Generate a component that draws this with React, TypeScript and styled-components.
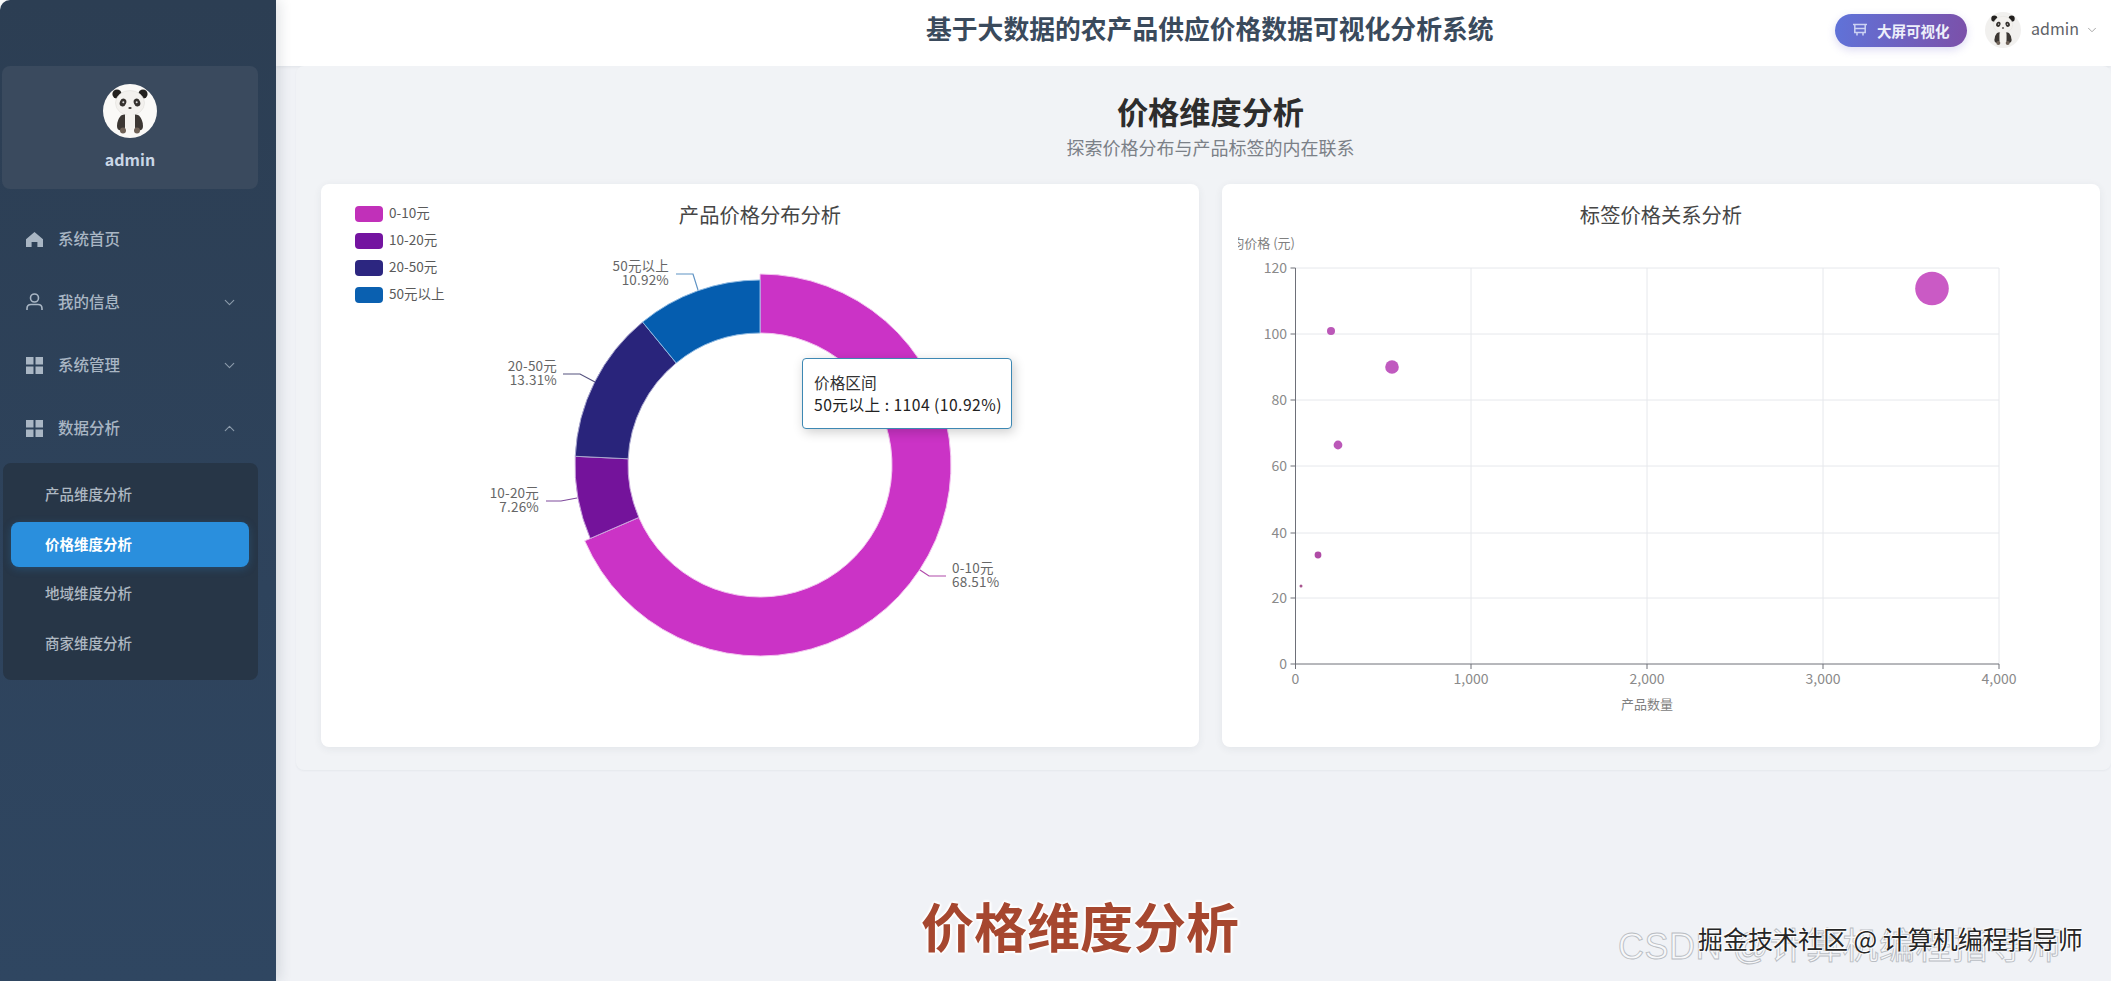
import React from "react";
import styled, { createGlobalStyle } from "styled-components";
import { ChevronDown, ChevronUp } from "lucide-react";

const CJK = `"Noto Sans CJK SC", "Noto Sans", sans-serif`;

const GlobalStyle = createGlobalStyle`
  html, body {
    margin: 0;
    padding: 0;
    width: 2111px;
    height: 981px;
    overflow: hidden;
    background: #ffffff;
    font-family: ${CJK};
  }
  * { box-sizing: border-box; }
`;

const menuItems = [
  { label: "系统首页", icon: "home", arrow: "none" },
  { label: "我的信息", icon: "user", arrow: "down" },
  { label: "系统管理", icon: "grid", arrow: "down" },
  { label: "数据分析", icon: "grid", arrow: "up" },
];

const subItems = [
  { label: "产品维度分析", active: false },
  { label: "价格维度分析", active: true },
  { label: "地域维度分析", active: false },
  { label: "商家维度分析", active: false },
];

const legendItems = [
  { label: "0-10元", color: "#c130b9" },
  { label: "10-20元", color: "#7414a0" },
  { label: "20-50元", color: "#2c2680" },
  { label: "50元以上", color: "#0a60b0" },
];

const polar = (cx: number, cy: number, r: number, deg: number) => {
  const rad = (deg * Math.PI) / 180;
  return [cx + r * Math.sin(rad), cy - r * Math.cos(rad)];
};

const ringSlice = (from: number, to: number, outer: number, inner: number) => {
  const cx = 760;
  const cy = 465;
  const [x1, y1] = polar(cx, cy, outer, from);
  const [x2, y2] = polar(cx, cy, outer, to);
  const [x3, y3] = polar(cx, cy, inner, to);
  const [x4, y4] = polar(cx, cy, inner, from);
  const large = to - from > 180 ? 1 : 0;
  return `M${x1} ${y1}A${outer} ${outer} 0 ${large} 1 ${x2} ${y2}L${x3} ${y3}A${inner} ${inner} 0 ${large} 0 ${x4} ${y4}Z`;
};

const slices = [
  { from: 0, to: 246.6, outer: 191, color: "#cb33c6", edge: "#f3c6f0" },
  { from: 246.6, to: 272.7, outer: 185, color: "#74139b", edge: "#c9a3dc" },
  { from: 272.7, to: 320.6, outer: 185, color: "#29247b", edge: "#a9a7cf" },
  { from: 320.6, to: 360, outer: 185, color: "#055daf", edge: "#8db9e2" },
];

const pieLabels = [
  { line: "698,290 693,274 676,274", stroke: "#5f93c4", x: 669, y: 265, anchor: "end", name: "50元以上", pct: "10.92%" },
  { line: "595,382 580,374 563,374", stroke: "#55527f", x: 557, y: 365, anchor: "end", name: "20-50元", pct: "13.31%" },
  { line: "577,498 561,501 546,501", stroke: "#7f4a9c", x: 539, y: 492, anchor: "end", name: "10-20元", pct: "7.26%" },
  { line: "920,570 929,576 946,576", stroke: "#b04aaa", x: 952, y: 567, anchor: "start", name: "0-10元", pct: "68.51%" },
];

const yTicks = [
  { v: "120", y: 268 },
  { v: "100", y: 334 },
  { v: "80", y: 400 },
  { v: "60", y: 466 },
  { v: "40", y: 533 },
  { v: "20", y: 598 },
  { v: "0", y: 664 },
];

const xTicks = [
  { v: "0", x: 1295.5 },
  { v: "1,000", x: 1471 },
  { v: "2,000", x: 1647 },
  { v: "3,000", x: 1823 },
  { v: "4,000", x: 1999 },
];

const points = [
  { x: 1331, y: 331, r: 4, color: "#bb58b8" },
  { x: 1392, y: 367, r: 6.8, color: "#c05abf" },
  { x: 1338, y: 445, r: 4.4, color: "#bb58b8" },
  { x: 1318, y: 555, r: 3.4, color: "#b04ca6" },
  { x: 1301, y: 586, r: 1.5, color: "#a8558f" },
  { x: 1932, y: 288.5, r: 16.8, color: "#ca5ac5" },
];

const Panda: React.FC<{ size: number; bg: string }> = ({ size, bg }) => (
  <svg width={size} height={size} viewBox="0 0 54 54">
    <circle cx="27" cy="27" r="27" fill={bg} />
    <circle cx="14" cy="10" r="4.6" fill="#23211f" />
    <circle cx="40" cy="10" r="4.6" fill="#23211f" />
    <ellipse cx="27" cy="19" rx="14.5" ry="12.5" fill="#f3f1ee" stroke="#dcdad6" strokeWidth="0.5" />
    <ellipse cx="20" cy="18.5" rx="3.2" ry="4" fill="#35312e" transform="rotate(20 20 18.5)" />
    <ellipse cx="34" cy="18.5" rx="3.2" ry="4" fill="#35312e" transform="rotate(-20 34 18.5)" />
    <circle cx="20.3" cy="18.2" r="1" fill="#d8d8d8" />
    <circle cx="33.7" cy="18.2" r="1" fill="#d8d8d8" />
    <ellipse cx="27" cy="24" rx="1.7" ry="1.1" fill="#3a3532" />
    <path d="M18 31.5q2-1 4-1v13q-1 3-4.5 3q-3.5-.5-3.5-4.5q0-6 4-10.5z" fill="#3c3733" />
    <path d="M36 31.5q-2-1-4-1v13q1 3 4.5 3q3.5-.5 3.5-4.5q0-6-4-10.5z" fill="#3c3733" />
    <rect x="22" y="30" width="10" height="16" rx="4" fill="#f4f2ee" />
    <circle cx="20" cy="46.5" r="3" fill="#6f6257" />
    <circle cx="34" cy="46.5" r="3" fill="#6f6257" />
  </svg>
);

const MenuIcon: React.FC<{ kind: string }> = ({ kind }) => {
  if (kind === "home") {
    return (
      <svg width="17" height="17" viewBox="0 0 17 17" fill="#a9b6c4">
        <path d="M8.5 1 17 8.2V16h-5.6v-5H5.6v5H0V8.2z" />
      </svg>
    );
  }
  if (kind === "user") {
    return (
      <svg width="17" height="18" viewBox="0 0 17 18" fill="none" stroke="#a9b6c4" strokeWidth="1.6">
        <circle cx="8.5" cy="5" r="4" />
        <path d="M1 17v-1.5Q1 11.5 5 11.5h7q4 0 4 4V17" />
      </svg>
    );
  }
  return (
    <svg width="17" height="17" viewBox="0 0 17 17" fill="#a9b6c4">
      <rect x="0" y="0" width="7.5" height="7.5" />
      <rect x="9.5" y="0" width="7.5" height="7.5" />
      <rect x="0" y="9.5" width="7.5" height="7.5" />
      <rect x="9.5" y="9.5" width="7.5" height="7.5" />
    </svg>
  );
};

const PriceDonut = () => (
  <ChartSvg width="878" height="518" viewBox="321 229 878 518">
    {slices.map((s) => (
      <path key={s.from} d={ringSlice(s.from, s.to, s.outer, 132)} fill={s.color} stroke={s.edge} strokeWidth="1" />
    ))}
    {pieLabels.map((l) => (
      <g key={l.name}>
        <polyline points={l.line} fill="none" stroke={l.stroke} strokeWidth="1.2" />
        <PieText x={l.x} y={l.y} textAnchor={l.anchor}>
          {l.name}
        </PieText>
        <PieText x={l.x} y={l.y + 13.5} textAnchor={l.anchor}>
          {l.pct}
        </PieText>
      </g>
    ))}
  </ChartSvg>
);

const TagScatter = () => (
  <ChartSvg width="878" height="518" viewBox="1222 229 878 518">
    <defs>
      <clipPath id="axisNameClip">
        <rect x="1238" y="229" width="100" height="30" />
      </clipPath>
    </defs>
    {yTicks.map((t) => (
      <g key={t.v}>
        {t.v !== "0" && <line x1="1295.5" x2="1999" y1={t.y} y2={t.y} stroke="#e6e8ec" strokeWidth="1" />}
        <line x1="1290.5" x2="1295.5" y1={t.y} y2={t.y} stroke="#6e7079" strokeWidth="1" />
        <AxisText x="1287" y={t.y - 1} textAnchor="end" dominantBaseline="central">
          {t.v}
        </AxisText>
      </g>
    ))}
    {xTicks.map((t) => (
      <g key={t.v}>
        {t.v !== "0" && <line x1={t.x} x2={t.x} y1="268" y2="664" stroke="#e6e8ec" strokeWidth="1" />}
        <line x1={t.x} x2={t.x} y1="664" y2="669" stroke="#6e7079" strokeWidth="1" />
        <AxisText x={t.x} y="678" textAnchor="middle" dominantBaseline="central">
          {t.v}
        </AxisText>
      </g>
    ))}
    <line x1="1295.5" x2="1295.5" y1="268" y2="664" stroke="#6e7079" strokeWidth="1" />
    <line x1="1295.5" x2="1999" y1="664" y2="664" stroke="#6e7079" strokeWidth="1" />
    <AxisName x="1295" y="242" textAnchor="end" dominantBaseline="central" clipPath="url(#axisNameClip)">
      平均价格 (元)
    </AxisName>
    <AxisName x="1647" y="703" textAnchor="middle" dominantBaseline="central">
      产品数量
    </AxisName>
    {points.map((p) => (
      <circle key={p.x} cx={p.x} cy={p.y} r={p.r} fill={p.color} />
    ))}
  </ChartSvg>
);

export default function App() {
  return (
    <Page>
      <GlobalStyle />
      <Sidebar>
        <Profile>
          <Panda size={54} bg="#faf9f7" />
          <ProfileName>admin</ProfileName>
        </Profile>
        <Menu>
          {menuItems.map((m) => (
            <MenuRow key={m.label}>
              <MenuIcon kind={m.icon} />
              <MenuLabel>{m.label}</MenuLabel>
              {m.arrow === "down" && <ChevronDown size={17} color="#8c9bab" strokeWidth={1.6} />}
              {m.arrow === "up" && <ChevronUp size={17} color="#8c9bab" strokeWidth={1.6} />}
            </MenuRow>
          ))}
        </Menu>
        <SubMenu>
          {subItems.map((s) => (
            <SubRow key={s.label} $active={s.active}>
              {s.label}
            </SubRow>
          ))}
        </SubMenu>
      </Sidebar>

      <Main>
        <Header>
          <SystemTitle>基于大数据的农产品供应价格数据可视化分析系统</SystemTitle>
          <HeaderRight>
            <ScreenButton>
              <svg width="16" height="16" viewBox="0 0 16 16" fill="none" stroke="#cdd3f3" strokeWidth="1.5">
                <path d="M1 2.5h14M2.8 2.5v8h10.4v-8M2.8 6.5h10.4M5 10.5v3M11 10.5v3" />
              </svg>
              大屏可视化
            </ScreenButton>
            <HeaderAvatar>
              <Panda size={36} bg="#f1f0ee" />
            </HeaderAvatar>
            <HeaderUser>admin</HeaderUser>
            <ChevronDown size={14} color="#9a9a9a" strokeWidth={1.5} />
          </HeaderRight>
        </Header>

        <Content>
          <Panel>
            <PageTitle>价格维度分析</PageTitle>
            <PageSubtitle>探索价格分布与产品标签的内在联系</PageSubtitle>
            <CardGrid>
              <Card>
                <CardTitle>产品价格分布分析</CardTitle>
                <Legend>
                  {legendItems.map((l) => (
                    <LegendRow key={l.label}>
                      <Swatch $color={l.color} />
                      <LegendText>{l.label}</LegendText>
                    </LegendRow>
                  ))}
                </Legend>
                <PriceDonut />
                <Tooltip>
                  <TooltipHead>价格区间</TooltipHead>
                  <TooltipBody>50元以上 : 1104 (10.92%)</TooltipBody>
                </Tooltip>
              </Card>
              <Card>
                <CardTitle>标签价格关系分析</CardTitle>
                <TagScatter />
              </Card>
            </CardGrid>
          </Panel>
        </Content>
      </Main>

      <GhostMark>CSDN @计算机编程指导师</GhostMark>
      <SiteMark>掘金技术社区 @ 计算机编程指导师</SiteMark>
      <Caption>价格维度分析</Caption>
    </Page>
  );
}

const Page = styled.div`
  position: relative;
  display: flex;
  width: 2111px;
  height: 981px;
  overflow: hidden;
  background: #ffffff;
`;

const Sidebar = styled.aside`
  position: relative;
  z-index: 2;
  flex: 0 0 276px;
  height: 981px;
  padding-top: 66px;
  border-top-left-radius: 10px;
  background: linear-gradient(180deg, #2c3e53 0%, #2e435c 60%, #2f4661 100%);
  box-shadow: 3px 0 14px rgba(30, 40, 60, 0.14);
`;

const Profile = styled.div`
  display: flex;
  flex-direction: column;
  align-items: center;
  width: 256px;
  height: 123px;
  margin-left: 2px;
  padding-top: 18px;
  border-radius: 8px;
  background: #3a4a5e;
`;

const ProfileName = styled.div`
  margin-top: 10px;
  font-size: 16px;
  line-height: 22px;
  font-weight: 700;
  color: #cad7e6;
`;

const Menu = styled.nav`
  margin-top: 18.5px;
`;

const MenuRow = styled.div`
  display: flex;
  align-items: center;
  height: 63px;
  padding-left: 26px;
  padding-right: 38px;
  gap: 15px;
`;

const MenuLabel = styled.span`
  flex: 1;
  margin-top: -3px;
  font-size: 15.5px;
  font-weight: 500;
  color: #a9b6c4;
`;

const SubMenu = styled.div`
  display: flex;
  flex-direction: column;
  gap: 4.5px;
  width: 255px;
  height: 217px;
  margin: 3.5px 0 0 3px;
  padding: 9.5px 9px 0 8px;
  border-radius: 8px;
  background: #273647;
`;

const SubRow = styled.div<{ $active: boolean }>`
  display: flex;
  align-items: center;
  height: 45px;
  padding: 0 0 3px 34px;
  border-radius: 8px;
  font-size: 14.5px;
  font-weight: ${(p) => (p.$active ? 700 : 500)};
  color: ${(p) => (p.$active ? "#ffffff" : "#aeb8c2")};
  background: ${(p) => (p.$active ? "#2a8fdd" : "transparent")};
  box-shadow: ${(p) => (p.$active ? "0 2px 8px rgba(42, 143, 221, 0.25)" : "none")};
`;

const Main = styled.main`
  flex: 1;
  display: flex;
  flex-direction: column;
  height: 981px;
  background: #f0f2f6;
`;

const Header = styled.header`
  display: flex;
  align-items: center;
  justify-content: space-between;
  flex: 0 0 66px;
  padding: 0 12px 6px 650px;
  background: #ffffff;
  box-shadow: 0 1px 3px rgba(40, 50, 70, 0.08);
`;

const SystemTitle = styled.h1`
  margin: -5px 0 0;
  font-size: 25.8px;
  line-height: 36px;
  font-weight: 700;
  white-space: nowrap;
  color: #3a4a5c;
`;

const HeaderRight = styled.div`
  display: flex;
  align-items: center;
`;

const ScreenButton = styled.div`
  display: flex;
  align-items: center;
  gap: 9px;
  width: 132px;
  height: 33px;
  padding-left: 17px;
  border-radius: 17px;
  font-size: 14.5px;
  font-weight: 700;
  white-space: nowrap;
  color: #eef0fb;
  background: linear-gradient(100deg, #5f73d9 0%, #7c50a9 100%);
  box-shadow: 0 3px 8px rgba(102, 90, 200, 0.22);
`;

const HeaderAvatar = styled.div`
  display: flex;
  margin-left: 18px;
`;

const HeaderUser = styled.span`
  margin: -4px 6px 0 10px;
  font-size: 16px;
  color: #5e6166;
`;

const Content = styled.div`
  padding-left: 20px;
`;

const Panel = styled.section`
  padding: 25px 11px 23px 25px;
  background: #f1f3f6;
  border-radius: 8px;
  box-shadow: 0 1px 2px rgba(40, 50, 70, 0.05);
`;

const PageTitle = styled.h2`
  margin: 0;
  font-size: 31.2px;
  line-height: 40px;
  font-weight: 700;
  text-align: center;
  color: #2d2d2d;
`;

const PageSubtitle = styled.p`
  margin: 4px 0 25px;
  font-size: 18px;
  line-height: 24px;
  text-align: center;
  color: #7b8087;
`;

const CardGrid = styled.div`
  display: grid;
  grid-template-columns: 878px 878px;
  gap: 23px;
`;

const Card = styled.div`
  position: relative;
  height: 563px;
  padding-top: 16px;
  border-radius: 8px;
  background: #ffffff;
  box-shadow: 0 2px 8px rgba(40, 50, 70, 0.07);
`;

const CardTitle = styled.h3`
  margin: 0 0 1px;
  font-size: 20.3px;
  line-height: 28px;
  font-weight: 400;
  text-align: center;
  color: #464646;
`;

const ChartSvg = styled.svg`
  display: block;
`;

const PieText = styled.text`
  font-family: ${CJK};
  font-size: 13.5px;
  letter-spacing: 0.2px;
  fill: #666666;
  dominant-baseline: central;
`;

const AxisText = styled.text`
  font-family: ${CJK};
  font-size: 14px;
  fill: #8a8a8a;
`;

const AxisName = styled.text`
  font-family: ${CJK};
  font-size: 13px;
  fill: #808080;
`;

const Legend = styled.div`
  position: absolute;
  left: 34px;
  top: 22px;
  display: flex;
  flex-direction: column;
  gap: 11px;
`;

const LegendRow = styled.div`
  display: flex;
  align-items: center;
  gap: 6px;
  height: 16px;
  font-size: 13.5px;
  color: #5a5a5a;
`;

const LegendText = styled.span`
  margin-top: -4px;
`;

const Swatch = styled.span<{ $color: string }>`
  width: 28px;
  height: 16px;
  border-radius: 4px;
  background: ${(p) => p.$color};
`;

const Tooltip = styled.div`
  position: absolute;
  left: 481px;
  top: 174px;
  width: 210px;
  height: 71px;
  padding: 13px 0 0 11px;
  border: 1px solid #3d88b3;
  border-radius: 4px;
  background: #ffffff;
  box-shadow: 2px 3px 12px rgba(0, 0, 0, 0.2);
`;

const TooltipHead = styled.div`
  font-size: 15.7px;
  line-height: 22px;
  color: #333333;
`;

const TooltipBody = styled.div`
  margin-top: -1px;
  font-size: 15.7px;
  line-height: 23px;
  letter-spacing: 0.45px;
  white-space: nowrap;
  color: #222222;
`;

const GhostMark = styled.div`
  position: absolute;
  z-index: 3;
  left: 1618px;
  top: 922px;
  font-family: "Liberation Sans", ${CJK};
  font-size: 36px;
  line-height: 50px;
  letter-spacing: 0.5px;
  white-space: nowrap;
  color: rgba(255, 255, 255, 0.55);
  -webkit-text-stroke: 0.9px #b9bdc3;
`;

const SiteMark = styled.div`
  position: absolute;
  z-index: 4;
  left: 1698px;
  top: 920px;
  font-size: 25px;
  line-height: 36px;
  white-space: nowrap;
  color: #262626;
  text-shadow: 0 0 2px #ffffff, 1px 1px 1px #ffffff, -1px -1px 1px #ffffff;
`;

const Caption = styled.div`
  position: absolute;
  z-index: 4;
  left: 921px;
  top: 887px;
  font-size: 53px;
  line-height: 76px;
  font-weight: 700;
  white-space: nowrap;
  color: #a6472f;
  text-shadow: 2px 0 2px #ffffff, -2px 0 2px #ffffff, 0 2px 2px #ffffff, 0 -2px 2px #ffffff;
`;
